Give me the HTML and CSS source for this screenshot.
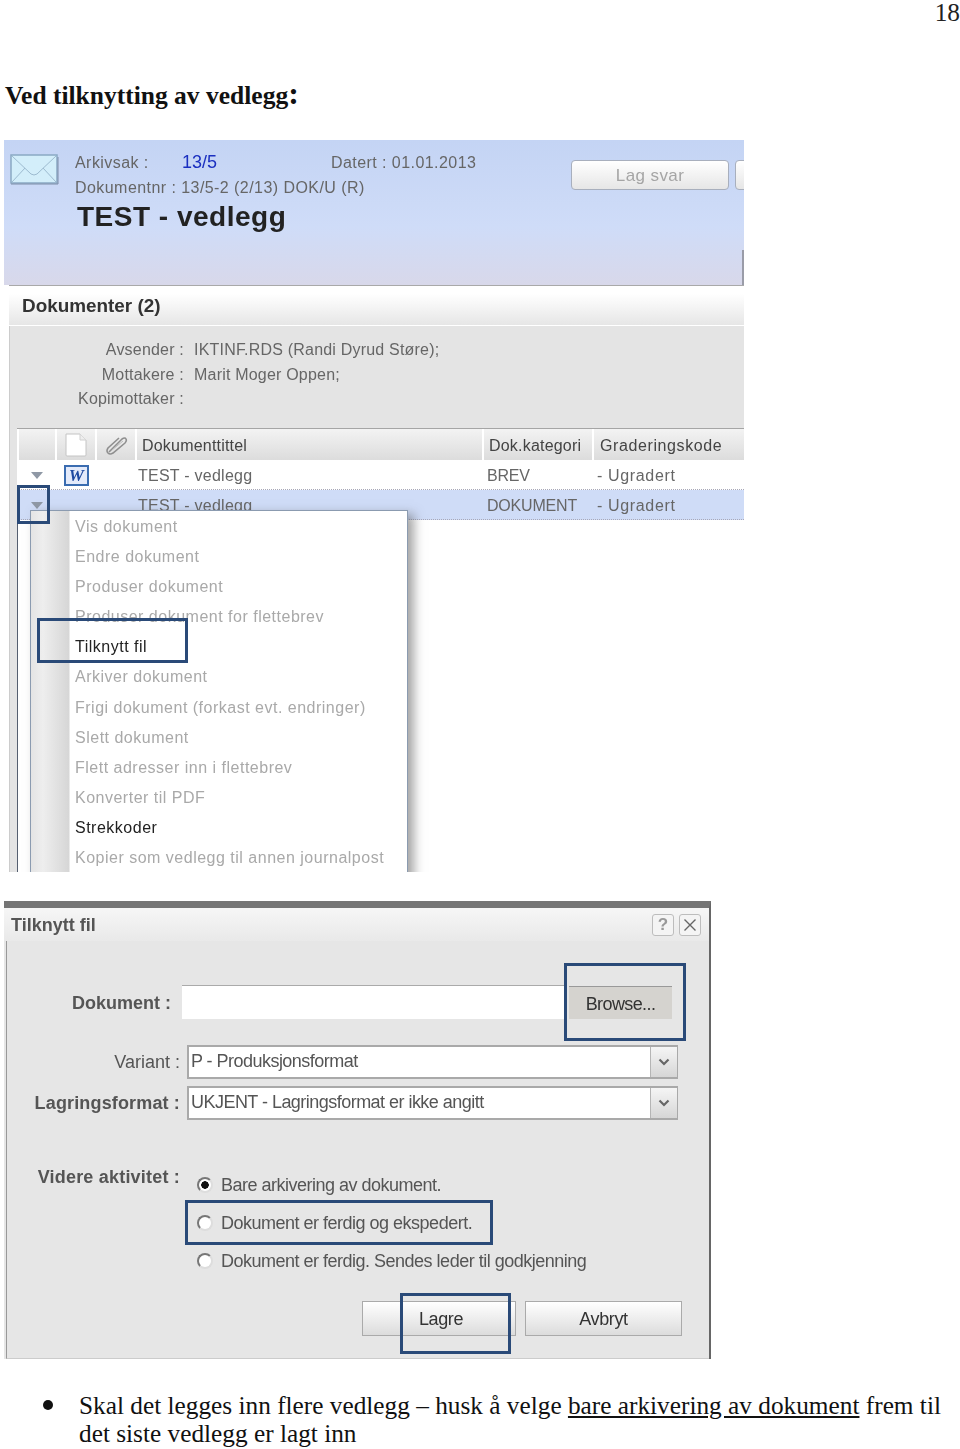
FILE: index.html
```html
<!DOCTYPE html>
<html lang="no">
<head>
    <meta charset="UTF-8">
    <meta name="viewport" content="width=device-width, initial-scale=1.0">
    <title>Ved tilknytting av vedlegg</title>
    <link rel="stylesheet" href="styles.css">
</head>
<body>
    <div class="page-num">18</div>
    <h2 class="page-title">Ved tilknytting av vedlegg<span class="colon">:</span></h2>

    <!-- skjermbilde 1: dokumentliste med meny -->
    <div class="shot-doc">
        <div class="doc-head">
            <svg class="envelope" width="49" height="31" viewBox="0 0 49 31">
                <rect x="1" y="1" width="46" height="28" fill="#d3eefa" stroke="#8aa9c4" stroke-width="1.5"/>
                <path d="M2 2 L21 20 Q24 22 27 20 L46 2 M2 28 L15 14 M46 28 L33 14" fill="none" stroke="#9dbbd0" stroke-width="1"/>
                <path d="M1 30 H48 V3" fill="none" stroke="#7d8da8" stroke-width="1"/>
            </svg>
            <div class="doc-info">
                <div class="info-row">
                    <span class="info-label">Arkivsak :</span>
                    <span class="info-link">13/5</span>
                    <span class="info-date">Datert : 01.01.2013</span>
                </div>
                <div class="info-row">Dokumentnr : 13/5-2 (2/13) DOK/U (R)</div>
                <div class="doc-name">TEST - vedlegg</div>
            </div>
            <div class="head-btns">
                <span class="head-btn">Lag svar</span>
                <span class="head-btn stub"></span>
            </div>
            <span class="head-tab"></span>
        </div>

        <div class="doc-panel">
            <div class="panel-title">Dokumenter (2)</div>
            <div class="panel-body">
                <div class="meta">
                    <span>Avsender :</span><span>IKTINF.RDS (Randi Dyrud Støre);</span>
                    <span>Mottakere :</span><span>Marit Moger Oppen;</span>
                    <span>Kopimottaker :</span><span></span>
                </div>
                <div class="tbl">
                    <div class="tbl-row tbl-head">
                        <div class="cell"></div>
                        <div class="cell icon-cell">
                            <svg width="24" height="24" viewBox="0 0 24 24"><path d="M2 1 H16 L22 7 V22 Q22 23 21 23 H3 Q2 23 2 22 Z" fill="#fff" stroke="#c4c4c4"/><path d="M16 1 V7 H22" fill="#eee" stroke="#d0d0d0"/></svg>
                        </div>
                        <div class="cell icon-cell">
                            <svg width="24" height="20" viewBox="0 0 24 20"><path d="M5 17 L18 4 Q21 2 22 4 Q23 6 21 8 L9 18 Q6 20 4 18 Q2 16 4 13 L15 3" fill="none" stroke="#8f8f8f" stroke-width="1.6"/><path d="M8 15 L19 6" stroke="#bbb" fill="none"/></svg>
                        </div>
                        <div class="cell">Dokumenttittel</div>
                        <div class="cell">Dok.kategori</div>
                        <div class="cell cell-grade">Graderingskode</div>
                    </div>
                    <div class="tbl-row doc-row">
                        <div class="arrow-cell"><span class="arrow"></span></div>
                        <div class="word-cell"><span class="word-icon">W</span></div>
                        <div></div>
                        <div class="title-cell">TEST - vedlegg</div>
                        <div class="cat-cell">BREV</div>
                        <div class="grade-cell">- Ugradert</div>
                    </div>
                    <div class="tbl-row doc-row selected">
                        <div class="arrow-cell"><span class="arrow"></span></div>
                        <div></div>
                        <div></div>
                        <div class="title-cell">TEST - vedlegg</div>
                        <div class="cat-cell">DOKUMENT</div>
                        <div class="grade-cell">- Ugradert</div>
                    </div>
                </div>
            </div>
            <div class="panel-rest"></div>
        </div>

        <div class="menu">
            <div class="menu-item">Vis dokument</div>
            <div class="menu-item">Endre dokument</div>
            <div class="menu-item">Produser dokument</div>
            <div class="menu-item">Produser dokument for flettebrev</div>
            <div class="menu-item on">Tilknytt fil</div>
            <div class="menu-item">Arkiver dokument</div>
            <div class="menu-item">Frigi dokument (forkast evt. endringer)</div>
            <div class="menu-item">Slett dokument</div>
            <div class="menu-item">Flett adresser inn i flettebrev</div>
            <div class="menu-item">Konverter til PDF</div>
            <div class="menu-item on">Strekkoder</div>
            <div class="menu-item">Kopier som vedlegg til annen journalpost</div>
        </div>

        <span class="mark mark-arrow"></span>
        <span class="mark mark-tilknytt"></span>
    </div>

    <!-- skjermbilde 2: dialog -->
    <div class="shot-dialog">
        <div class="dlg-title">
            <span>Tilknytt fil</span>
            <div class="dlg-btns">
                <span class="dlg-btn">?</span>
                <span class="dlg-btn">
                    <svg width="14" height="14" viewBox="0 0 14 14"><path d="M1.5 1.5 L12.5 12.5 M12.5 1.5 L1.5 12.5" stroke="#666" stroke-width="1.4"/></svg>
                </span>
            </div>
        </div>
        <div class="dlg-body">
            <div class="file-row">
                <label class="lbl-file">Dokument :</label>
                <div class="file-input"></div>
                <div class="browse">Browse...</div>
            </div>
            <div class="sel-row">
                <label class="lbl-plain">Variant :</label>
                <div class="select">
                    <span class="select-text">P - Produksjonsformat</span>
                    <span class="select-arrow"><svg width="12" height="8" viewBox="0 0 12 8"><path d="M1.5 1.5 L6 6 L10.5 1.5" fill="none" stroke="#666" stroke-width="2.2"/></svg></span>
                </div>
            </div>
            <div class="sel-row second">
                <label>Lagringsformat :</label>
                <div class="select">
                    <span class="select-text">UKJENT - Lagringsformat er ikke angitt</span>
                    <span class="select-arrow"><svg width="12" height="8" viewBox="0 0 12 8"><path d="M1.5 1.5 L6 6 L10.5 1.5" fill="none" stroke="#666" stroke-width="2.2"/></svg></span>
                </div>
            </div>
            <div class="activity">
                <label>Videre aktivitet :</label>
                <div class="radios">
                    <div class="radio-row"><span class="radio checked"></span>Bare arkivering av dokument.</div>
                    <div class="radio-row"><span class="radio"></span>Dokument er ferdig og ekspedert.</div>
                    <div class="radio-row"><span class="radio"></span>Dokument er ferdig. Sendes leder til godkjenning</div>
                </div>
            </div>
            <div class="dlg-actions">
                <span class="dlg-action save">Lagre</span>
                <span class="dlg-action">Avbryt</span>
            </div>
        </div>
        <span class="mark mark-browse"></span>
        <span class="mark mark-radio"></span>
        <span class="mark mark-lagre"></span>
    </div>

    <ul class="notes">
        <li><span>Skal det legges inn flere vedlegg – husk å velge <u>bare arkivering av dokument</u> frem til det siste vedlegg er lagt inn</span></li>
    </ul>
</body>
</html>
```

FILE: styles.css
```css
html, body {
    margin: 0;
    padding: 0;
    background: #fff;
}
body {
    height: 1449px;
    overflow: hidden;
    font-family: "Liberation Serif", "Times New Roman", serif;
    color: #111;
}

.page-num {
    height: 24px;
    text-align: right;
    font-size: 25.3px;
    line-height: 24px;
    color: #222;
}
.page-title {
    margin: 58px 0 0 5px;
    height: 28px;
    font-size: 25.5px;
    line-height: 28px;
    font-weight: bold;
}
.colon { font-size: 32px; line-height: 20px; }

/* felles for skjermbildene */
.shot-doc, .shot-dialog {
    position: relative;
    margin-left: 4px;
    overflow: hidden;
    font-family: "Liberation Sans", Arial, sans-serif;
    filter: blur(0.35px);
}
.mark {
    position: absolute;
    box-sizing: border-box;
    border: 3px solid #2a4a78;
}

/* skjermbilde 1 */
.shot-doc {
    margin-top: 30px;
    width: 740px;
    height: 732px;
    font-size: 16px;
    color: #666;
}
.doc-head {
    position: relative;
    display: flex;
    box-sizing: border-box;
    height: 145px;
    padding: 14px 0 0 6px;
    background: linear-gradient(#c4d4f4 0, #cfdcf8 60%, #d8d8ea 100%);
}
.envelope { flex: none; margin-right: 16px; }
.doc-info { width: 496px; flex: none; }
.info-row {
    display: flex;
    height: 25px;
    line-height: 17px;
    letter-spacing: 0.44px;
}
.info-label { width: 107px; }
.info-link { width: 149px; color: #1a2fc0; font-size: 18px; letter-spacing: 0; }
.doc-name {
    margin: -2px 0 0 2px;
    font-size: 28px;
    line-height: 30px;
    font-weight: bold;
    color: #222;
    letter-spacing: 0.5px;
}
.head-btns {
    display: flex;
    gap: 6px;
    padding-top: 6px;
}
.head-btn {
    flex: none;
    box-sizing: border-box;
    width: 158px;
    height: 30px;
    border: 1px solid #a8afbd;
    border-radius: 4px;
    background: linear-gradient(#fff, #e6e6e6);
    text-align: center;
    line-height: 29px;
    font-size: 17px;
    letter-spacing: 0.4px;
    color: #a5a5a5;
}
.head-btn.stub { width: 40px; }
.head-tab {
    position: absolute;
    right: 0;
    bottom: 0;
    width: 2px;
    height: 35px;
    background: #9a9ca8;
}

.doc-panel {
    margin-left: 5px;
    height: 587px;
    display: flex;
    flex-direction: column;
    border-top: 1px solid #a9a9a9;
    background: #fff;
}
.panel-title {
    box-sizing: border-box;
    height: 40px;
    padding: 10px 0 0 13px;
    font-size: 18.9px;
    line-height: 20px;
    font-weight: bold;
    color: #333;
    background: linear-gradient(#fff 20%, #e6e6e6 100%);
    border-bottom: 1px solid #fff;
}
.panel-body {
    background: #e4e4e4;
    padding-top: 14px;
    border-left: 1px solid #ccc;
    height: 181px;
    box-sizing: border-box;
    flex: none;
}
.meta {
    display: grid;
    grid-template-columns: 174px 1fr;
    column-gap: 10px;
    grid-auto-rows: 24.7px;
    line-height: 20px;
    height: 88px;
    letter-spacing: 0.2px;
}
.meta span:nth-child(odd) { text-align: right; }
.tbl {
    margin-left: 7px;
}
.tbl-row {
    display: grid;
    grid-template-columns: 38px 40px 40px 347px 110px 1fr;
}
.tbl-head {
    height: 32px;
    border-top: 1px solid #a5a5a5;
    box-sizing: border-box;
    background: #fff;
    color: #444;
}
.cell {
    display: flex;
    align-items: center;
    padding: 2px 0 0 5px;
    border-left: 2px solid #fff;
    background: linear-gradient(#f3f3f3, #dcdcdc);
    letter-spacing: 0.2px;
}
.cell-grade { padding-left: 6px; letter-spacing: 0.6px; }
.icon-cell { padding: 0; justify-content: center; }
.doc-row {
    height: 30px;
    background: #fff;
    line-height: 31px;
    align-items: stretch;
    border-bottom: 1px dotted #a8a8b8;
    box-sizing: border-box;
    letter-spacing: 0.25px;
}
.doc-row.selected {
    background: #cfdcf7;
    border-top: 0;
}
.title-cell { padding-left: 3px; }
.cat-cell { padding-left: 5px; letter-spacing: -0.2px; }
.grade-cell { padding-left: 5px; letter-spacing: 0.65px; }
.arrow-cell { display: flex; align-items: center; padding-left: 14px; }
.arrow {
    width: 0;
    height: 0;
    border-left: 6px solid transparent;
    border-right: 6px solid transparent;
    border-top: 7px solid #8f98a5;
}
.word-cell { display: flex; align-items: center; padding-left: 9px; }
.word-icon {
    box-sizing: border-box;
    width: 25px;
    height: 21px;
    border: 2px solid #3a6cb0;
    background: #e3eafa;
    color: #1f4aa0;
    font: italic bold 17px/17px "Liberation Serif", serif;
    text-align: center;
}
.panel-rest {
    flex: 1;
    width: 7px;
    background: #e4e4e4;
    border-left: 1px solid #ccc;
    border-right: 1px solid #555f70;
}

.menu {
    position: absolute;
    left: 26px;
    top: 370px;
    box-sizing: border-box;
    width: 378px;
    height: 380px;
    padding: 1px 0 0 44px;
    border: 1px solid #8b9bb0;
    background: linear-gradient(90deg, #e4e4e4 0, #eeeeee 12px, #d6d6d6 38px, #fff 39px);
    box-shadow: 6px 4px 10px rgba(90, 90, 90, 0.55);
    color: #a9a9a9;
}
.menu-item {
    height: 30.1px;
    line-height: 30px;
    letter-spacing: 0.5px;
}
.menu-item.on { color: #222; letter-spacing: 0.5px; }
.mark-arrow { left: 13px; top: 345px; width: 33px; height: 39px; }
.mark-tilknytt { left: 33px; top: 478px; width: 151px; height: 45px; }

/* skjermbilde 2 */
.shot-dialog {
    margin-top: 29px;
    width: 707px;
    height: 458px;
    background: #e6e6e6;
    border-top: 7px solid #757575;
    box-sizing: border-box;
    border-right: 2px solid #666;
    color: #555;
    font-size: 18px;
}
.dlg-title {
    display: flex;
    justify-content: space-between;
    align-items: center;
    box-sizing: border-box;
    height: 33px;
    padding: 1px 8px 0 7px;
    background: linear-gradient(#f6f6f6, #e9e9e9);
    font-weight: bold;
    font-size: 18px;
}
.dlg-btns { display: flex; gap: 5px; }
.dlg-btn {
    display: flex;
    align-items: center;
    justify-content: center;
    box-sizing: border-box;
    width: 22px;
    height: 22px;
    border: 1px solid #bdbdbd;
    border-radius: 3px;
    background: #f4f4f4;
    color: #999;
    font-weight: bold;
    font-size: 17px;
}
.dlg-body {
    box-sizing: border-box;
    height: 418px;
    margin-left: 2px;
    border-left: 1px solid #999;
    border-bottom: 1px solid #ccc;
}
.file-row {
    display: flex;
    align-items: center;
    padding-top: 44px;
}
.lbl-file {
    width: 164px;
    padding-top: 3px;
    text-align: right;
    font-weight: bold;
}
.file-input {
    box-sizing: border-box;
    width: 383px;
    height: 34px;
    margin-left: 11px;
    background: #fff;
    border-top: 1px solid #aaa;
}
.browse {
    box-sizing: border-box;
    width: 103px;
    height: 33px;
    margin-left: 4px;
    background: #d5d3cf;
    border-top: 1px solid #999;
    color: #333;
    text-align: center;
    line-height: 35px;
    font-size: 18px;
    letter-spacing: -0.6px;
}
.sel-row {
    display: flex;
    align-items: center;
    margin-top: 26px;
}
.sel-row.second { margin-top: 7px; }
.sel-row label {
    width: 173px;
    text-align: right;
    font-weight: bold;
    letter-spacing: 0.15px;
}
.sel-row .lbl-plain { font-weight: normal; letter-spacing: 0; }
.select {
    display: flex;
    box-sizing: border-box;
    width: 491px;
    height: 34px;
    margin-left: 7px;
    border: 1px solid #a9a9a9;
    border-width: 2px 1px 2px 2px;
    background: #fff;
}
.select-text {
    flex: 1;
    padding-left: 2px;
    line-height: 29px;
    font-size: 18px;
    letter-spacing: -0.53px;
}
.select-arrow {
    display: flex;
    align-items: center;
    justify-content: center;
    width: 26px;
    background: linear-gradient(#f5f5f5, #d6d6d6);
    border-left: 1px solid #b5b5b5;
}
.activity {
    display: flex;
    align-items: flex-start;
    margin-top: 43px;
}
.activity label {
    width: 173px;
    padding-top: 4px;
    text-align: right;
    font-weight: bold;
    line-height: 20px;
    letter-spacing: 0.2px;
}
.radios { margin: 3px 0 0 17px; }
.radio-row {
    display: flex;
    align-items: center;
    height: 38px;
    font-size: 18px;
    letter-spacing: -0.5px;
    color: #555;
}
.radio {
    box-sizing: border-box;
    width: 16px;
    height: 16px;
    margin-right: 8px;
    border: 2px solid #777;
    border-right-color: #ddd;
    border-bottom-color: #ddd;
    border-radius: 50%;
    background: #fff;
}
.radio.checked { background: radial-gradient(#111 0, #111 3.5px, #fff 4px); }
.dlg-actions {
    display: flex;
    gap: 9px;
    padding-left: 355px;
    margin-top: 21px;
}
.dlg-action {
    box-sizing: border-box;
    width: 157px;
    height: 35px;
    border: 1px solid #aaa;
    background: linear-gradient(#fff, #dcdcdc);
    color: #333;
    text-align: center;
    line-height: 34px;
    font-size: 18px;
    letter-spacing: -0.4px;
}
.dlg-action.save { width: 154px; padding-left: 4px; }
.mark-browse { left: 560px; top: 55px; width: 122px; height: 78px; }
.mark-radio { left: 181px; top: 292px; width: 308px; height: 45px; }
.mark-lagre { left: 396px; top: 385px; width: 111px; height: 61px; }

/* punktliste under bildene */
.notes {
    margin: 32px 14px 0 43px;
    padding: 0;
    list-style: none;
    font-size: 25.3px;
    line-height: 28px;
    color: #111;
}
.notes li { display: flex; }
.notes li::before {
    content: "";
    flex: none;
    width: 10px;
    height: 10px;
    margin: 9px 26px 0 0;
    border-radius: 50%;
    background: #111;
}
```
